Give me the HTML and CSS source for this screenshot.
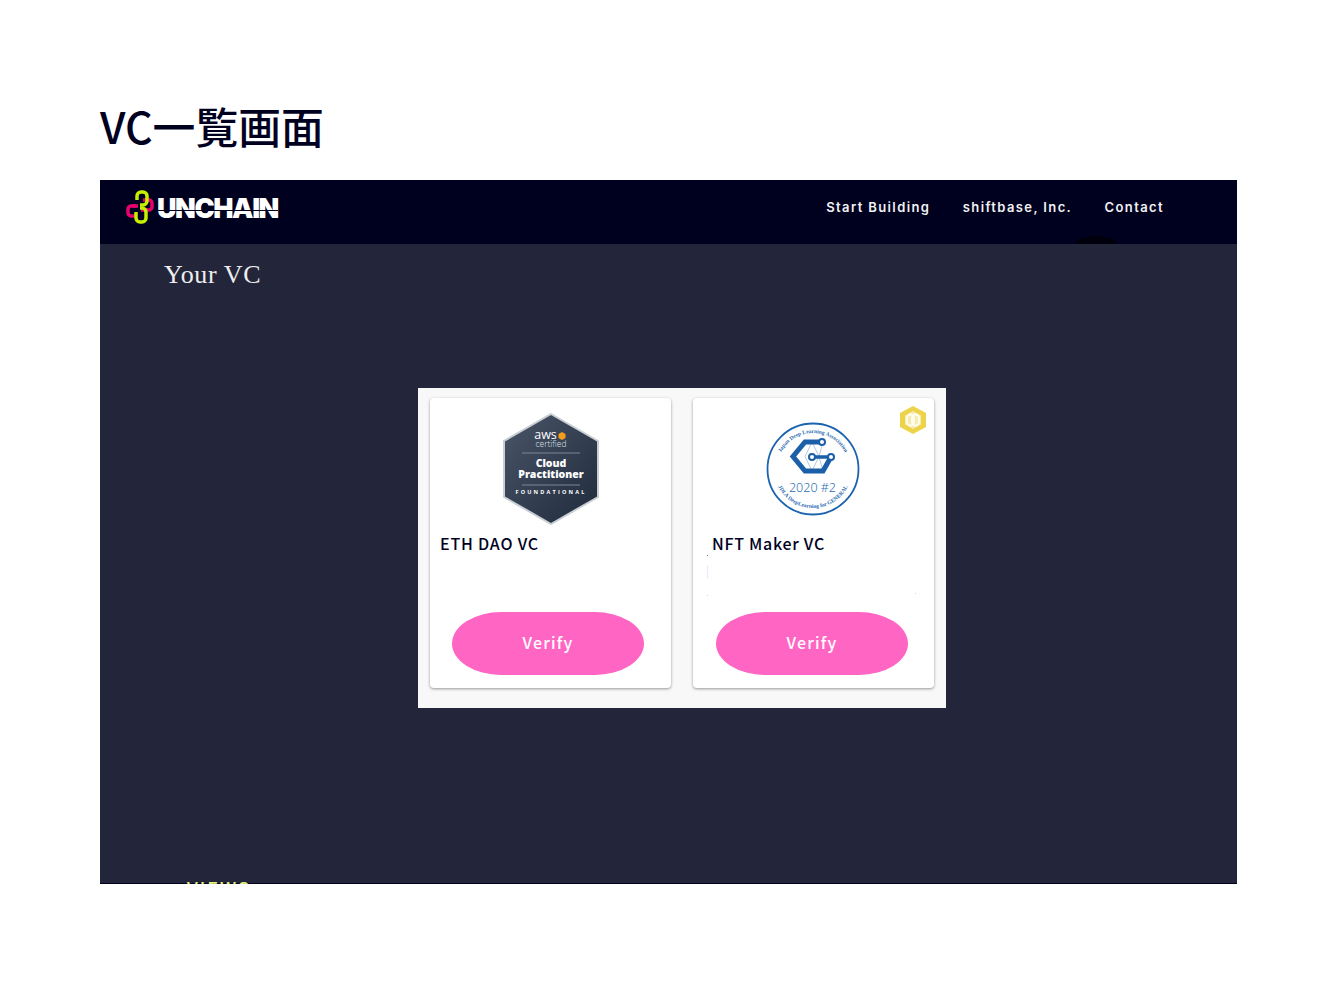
FILE: index.html
```html
<!DOCTYPE html>
<html lang="ja">
<head>
  <meta charset="UTF-8" />
  <meta name="viewport" content="width=device-width, initial-scale=1.0"/>
  <title>VC一覧画面</title>
  <link rel="stylesheet" href="styles.css">
</head>
<body>
  <h1>VC一覧画面</h1>

  <div class="slide">
    <header class="topbar">
      <a class="logo" href="#">
        <svg class="logo-mark" width="28" height="34" viewBox="0 0 28 34" fill="none">
          <path d="M10 16H5a3 3 0 0 0-3 3v4a3 3 0 0 0 3 3h5" stroke="#e8006f" stroke-width="3.500"/>
          <path d="M17 10h6a3 3 0 0 1 3 3v4a3 3 0 0 1-3 3h-6" stroke="#e8006f" stroke-width="3.500"/>
          <path d="M6 16h6M15 20h7" stroke="#e8006f" stroke-width="3.500"/>
          <path d="M11 10V6a4 4 0 0 1 4-4h2a4 4 0 0 1 4 4v5a4 4 0 0 1-4 4h-3" stroke="#c6f000" stroke-width="3.500"/>
          <path d="M14 18h2a4 4 0 0 1 4 4v6a4 4 0 0 1-4 4h-2a4 4 0 0 1-4-4v-6" stroke="#c6f000" stroke-width="3.500"/>
        </svg>
        <span class="logo-text">UNCHAIN</span>
      </a>
      <nav class="topnav">
        <a href="#">Start Building</a>
        <a href="#">shiftbase, Inc.</a>
        <a href="#">Contact</a>
      </nav>
      <span class="topbar-blob"></span>
    </header>

    <main class="slide-body">
      <h2>Your VC</h2>

      <section class="panel">
        <article class="card">
          <div class="card-image">
            <svg width="98" height="112" viewBox="0 0 98 112">
              <defs>
                <linearGradient id="awsFill" x1="0" y1="0" x2="1" y2="1">
                  <stop offset="0" stop-color="#4a5568"/>
                  <stop offset="1" stop-color="#1f2b3c"/>
                </linearGradient>
              </defs>
              <polygon points="49,1 96,28 96,84 49,111 2,84 2,28" fill="url(#awsFill)" stroke="#c9ced3" stroke-width="2"/>
              <text x="43.500" y="26" class="aws-word">aws</text>
              <path d="M60 19l3.500 2v4l-3.500 2-3.500-2v-4z" fill="#f39c1f"/>
              <text x="49" y="34" class="aws-small">certified</text>
              <path d="M20 40h58M20 72h58" stroke="#7d8894" stroke-width="1"/>
              <text x="49" y="54" class="aws-strong">Cloud</text>
              <text x="49" y="65" class="aws-strong">Practitioner</text>
              <text x="49" y="81" class="aws-level">FOUNDATIONAL</text>
            </svg>
          </div>
          <h3 class="card-title">ETH DAO VC</h3>
          <button class="verify">Verify</button>
        </article>

        <article class="card card-second">
          <svg class="card-mark" width="28" height="30" viewBox="0 0 28 30" fill="none">
            <polygon points="14,1 27,8 27,22 14,29 1,22 1,8" fill="#ecd347"/>
            <polygon points="14,6 22,10.500 22,19.500 14,24 6,19.500 6,10.500" fill="#f5ecb4"/>
            <rect x="8" y="9.500" width="7" height="11" rx="3.500" stroke="#fffdf0" stroke-width="1.800"/>
            <rect x="13" y="9.500" width="7" height="11" rx="3.500" stroke="#fffdf0" stroke-width="1.800"/>
          </svg>
          <div class="card-image">
            <svg width="94" height="94" viewBox="0 0 94 94" fill="none">
              <defs>
                <path id="arcTop" d="M11 47a36 36 0 0 1 72 0"/>
                <path id="arcBottom" d="M8 47a39 39 0 0 0 78 0"/>
              </defs>
              <circle cx="47" cy="47" r="45.500" stroke="#1b63ae" stroke-width="1.800"/>
              <text class="jdla-arc"><textPath href="#arcTop" startOffset="50%" text-anchor="middle">Japan Deep Learning Association</textPath></text>
              <text class="jdla-arc"><textPath href="#arcBottom" startOffset="50%" text-anchor="middle">JDLA DeepLearning for GENERAL</textPath></text>
              <path d="M39 34.500L46 20 53 34.500 46 49M57 49L53 34.500 57 20M39 34.500L46 49" stroke="#7ea6cf" stroke-width=".6"/>
              <path d="M53 20H39L27 34.500 39 49H57L65 35" stroke="#1b5fa8" stroke-width="5"/>
              <path d="M46 35H65" stroke="#1b5fa8" stroke-width="3.500"/>
              <circle cx="56" cy="20" r="3" fill="#fff" stroke="#1b5fa8" stroke-width="2"/>
              <circle cx="46" cy="35" r="3" fill="#fff" stroke="#1b5fa8" stroke-width="2"/>
              <circle cx="65" cy="35" r="3" fill="#fff" stroke="#1b5fa8" stroke-width="2"/>
              <text x="46.500" y="70" class="jdla-year">2020 #2</text>
            </svg>
          </div>
          <h3 class="card-title">NFT Maker VC</h3>
          <button class="verify">Verify</button>
          <span class="speck speck-a"></span>
          <span class="speck speck-b"></span>
          <span class="speck speck-c"></span>
          <span class="speck speck-d"></span>
        </article>
      </section>

      <p class="cut-title">VIEWS</p>
    </main>
  </div>
</body>
</html>
```

FILE: styles.css
```css
* {
  box-sizing: border-box;
}

body {
  margin: 0;
  padding: 98px 101px 0 100px;
  background-color: white;
  font-family: "Noto Sans CJK JP", "Noto Sans", sans-serif;
}

h1 {
  margin: 0 0 28px;
  font-size: 42.800px;
  line-height: 54px;
  font-weight: 500;
  color: #00001f;
}

.slide {
  height: 704px;
  overflow: hidden;
  background-color: #23253a;
  box-shadow: inset 0 -1px 0 #00001f;
}

.topbar {
  position: relative;
  height: 64px;
  overflow: hidden;
  display: flex;
  align-items: center;
  padding: 0 73px 10px 26px;
  background-color: #00001f;
}

.logo {
  display: flex;
  align-items: center;
  gap: 3px;
  text-decoration: none;
}

.logo-text {
  position: relative;
  top: 2px;
  font-family: Inter, sans-serif;
  font-size: 27px;
  line-height: 34px;
  font-weight: 900;
  letter-spacing: -1.4px;
  color: white;
}

.logo-text::after {
  content: "";
  position: absolute;
  left: 0;
  right: 0;
  top: 18px;
  height: 1px;
  background-color: #00001f;
}

.topnav {
  margin-left: auto;
  display: flex;
  gap: 32.500px;
}

.topnav a {
  font-family: Inter, sans-serif;
  font-size: 13px;
  font-weight: 600;
  letter-spacing: 1.38px;
  color: #f2f2f2;
  text-decoration: none;
}

.topbar-blob {
  position: absolute;
  left: 975px;
  bottom: -10px;
  width: 42px;
  height: 18px;
  border-radius: 50%;
  background-color: #00000c;
}

.slide-body {
  padding-top: 14px;
}

h2 {
  margin: 0 0 96px 64px;
  font-family: "Liberation Serif", serif;
  font-size: 26px;
  line-height: 34px;
  font-weight: normal;
  letter-spacing: 0.6px;
  color: #eeeeee;
}

.panel {
  width: 528px;
  height: 320px;
  margin-left: 318px;
  display: flex;
  gap: 22px;
  padding: 10px 12px 20px;
  background-color: #f8f8f8;
}

.card {
  position: relative;
  width: 241px;
  display: flex;
  flex-direction: column;
  padding: 15px 27px 13px 22px;
  background-color: white;
  border-radius: 4px;
  box-shadow: 0 1px 3px rgba(0, 0, 0, 0.4);
}

.card-second {
  padding-left: 23px;
  padding-right: 26px;
}

.card-image {
  height: 112px;
  margin: 0 -27px 0 -22px;
  display: flex;
  justify-content: center;
  align-items: center;
}

.card-second .card-image {
  margin: 0 -25px 0 -23px;
}

.card-title {
  margin: 7px 0 0 -12px;
  font-size: 16px;
  line-height: 22px;
  font-weight: 500;
  letter-spacing: 0.8px;
  color: #00001f;
}

.card-second .card-title {
  margin-left: -4px;
  letter-spacing: 0.72px;
}

.verify {
  margin-top: auto;
  width: 192px;
  height: 63px;
  padding: 0 0 3px;
  border: none;
  border-radius: 50px / 32px;
  background-color: #ff66c4;
  color: white;
  font-family: "Noto Sans CJK JP", sans-serif;
  font-size: 16px;
  font-weight: 500;
  letter-spacing: 1.2px;
}

.card-mark {
  position: absolute;
  right: 7px;
  top: 7px;
}

.speck {
  position: absolute;
  width: 1px;
  background-color: #c9d6e8;
}

.speck-a {
  left: 14px;
  top: 157px;
  height: 1px;
  background-color: #4a7fd0;
}

.speck-b {
  left: 14px;
  top: 167px;
  height: 14px;
  background-color: #e4edf8;
}

.speck-c {
  left: 14px;
  top: 197px;
  height: 1px;
}

.speck-d {
  left: 222px;
  top: 195px;
  height: 1px;
}

.cut-title {
  margin: 168px 0 0 87px;
  font-size: 18px;
  line-height: 24px;
  font-weight: 500;
  letter-spacing: 2px;
  color: #e6f27a;
}

/* svg text inside the badges */
.aws-word {
  font-family: "Open Sans", sans-serif;
  font-size: 12.500px;
  font-weight: 500;
  fill: white;
  text-anchor: middle;
}

.aws-small {
  font-family: "Open Sans", sans-serif;
  font-size: 8.500px;
  font-weight: 300;
  fill: #dfe3e7;
  text-anchor: middle;
}

.aws-strong {
  font-family: "Open Sans", sans-serif;
  font-size: 10.500px;
  font-weight: 800;
  fill: white;
  text-anchor: middle;
}

.aws-level {
  font-family: "Open Sans", sans-serif;
  font-size: 5.500px;
  font-weight: 700;
  letter-spacing: 2.200px;
  fill: white;
  text-anchor: middle;
}

.jdla-arc {
  font-family: "Liberation Serif", serif;
  font-size: 5.500px;
  font-weight: bold;
  fill: #2a6cb2;
}

.jdla-year {
  font-family: "Noto Sans", sans-serif;
  font-size: 12.500px;
  font-weight: 300;
  fill: #2a6cb2;
  text-anchor: middle;
}
```
